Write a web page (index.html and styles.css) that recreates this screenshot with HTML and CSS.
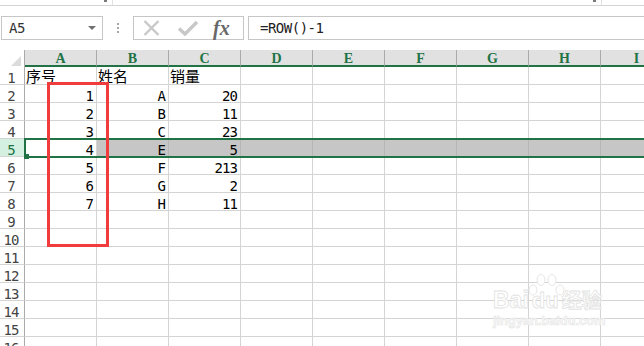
FILE: index.html
```html
<!DOCTYPE html>
<html>
<head>
<meta charset="utf-8">
<link rel="stylesheet" href="styles.css">
</head>
<body>
<div class="topstrip"><span class="mark mark1"></span><span class="tick"></span><span class="mark mark2"></span><span class="tick"></span></div>
<div class="fbar">
  <div class="namebox"><span>A5</span><span class="caret"></span></div>
  <div class="vdots"><i></i><i></i><i></i></div>
  <div class="fbtns">
    <svg class="ic-x" width="17" height="16" viewBox="0 0 17 16"><path d="M1.5 1 L15.5 15 M15.5 1 L1.5 15" stroke="#c8c8c8" stroke-width="2.4" fill="none"/></svg>
    <svg class="ic-ok" width="20" height="16" viewBox="0 0 20 16"><path d="M1 8.5 L7 14 L19 2" stroke="#c8c8c8" stroke-width="3.4" fill="none"/></svg>
    <span class="fx">fx</span>
  </div>
  <div class="formula">=ROW()-1</div>
</div>
<div class="sheet">
  <div class="grid">
    <div class="corner"><svg width="10" height="10" viewBox="0 0 10 10"><path d="M10 0 L10 10 L0 10 Z" fill="#dcdcdc"/></svg></div>
    <div class="ch">A</div><div class="ch">B</div><div class="ch">C</div><div class="ch">D</div><div class="ch">E</div><div class="ch">F</div><div class="ch">G</div><div class="ch">H</div><div class="ch">I</div>

    <div class="rh">1</div><div class="c cn">序号</div><div class="c cn">姓名</div><div class="c cn">销量</div><div class="c"></div><div class="c"></div><div class="c"></div><div class="c"></div><div class="c"></div><div class="c"></div>
    <div class="rh">2</div><div class="c r">1</div><div class="c r">A</div><div class="c r">20</div><div class="c"></div><div class="c"></div><div class="c"></div><div class="c"></div><div class="c"></div><div class="c"></div>
    <div class="rh">3</div><div class="c r">2</div><div class="c r">B</div><div class="c r">11</div><div class="c"></div><div class="c"></div><div class="c"></div><div class="c"></div><div class="c"></div><div class="c"></div>
    <div class="rh">4</div><div class="c r">3</div><div class="c r">C</div><div class="c r">23</div><div class="c"></div><div class="c"></div><div class="c"></div><div class="c"></div><div class="c"></div><div class="c"></div>
    <div class="rh rh-sel">5</div><div class="c r">4</div><div class="c r sel">E</div><div class="c r sel">5</div><div class="c sel"></div><div class="c sel"></div><div class="c sel"></div><div class="c sel"></div><div class="c sel"></div><div class="c sel"></div>
    <div class="rh">6</div><div class="c r">5</div><div class="c r">F</div><div class="c r">213</div><div class="c"></div><div class="c"></div><div class="c"></div><div class="c"></div><div class="c"></div><div class="c"></div>
    <div class="rh">7</div><div class="c r">6</div><div class="c r">G</div><div class="c r">2</div><div class="c"></div><div class="c"></div><div class="c"></div><div class="c"></div><div class="c"></div><div class="c"></div>
    <div class="rh">8</div><div class="c r">7</div><div class="c r">H</div><div class="c r">11</div><div class="c"></div><div class="c"></div><div class="c"></div><div class="c"></div><div class="c"></div><div class="c"></div>
    <div class="rh">9</div><div class="c"></div><div class="c"></div><div class="c"></div><div class="c"></div><div class="c"></div><div class="c"></div><div class="c"></div><div class="c"></div><div class="c"></div>
    <div class="rh">10</div><div class="c"></div><div class="c"></div><div class="c"></div><div class="c"></div><div class="c"></div><div class="c"></div><div class="c"></div><div class="c"></div><div class="c"></div>
    <div class="rh">11</div><div class="c"></div><div class="c"></div><div class="c"></div><div class="c"></div><div class="c"></div><div class="c"></div><div class="c"></div><div class="c"></div><div class="c"></div>
    <div class="rh">12</div><div class="c"></div><div class="c"></div><div class="c"></div><div class="c"></div><div class="c"></div><div class="c"></div><div class="c"></div><div class="c"></div><div class="c"></div>
    <div class="rh">13</div><div class="c"></div><div class="c"></div><div class="c"></div><div class="c"></div><div class="c"></div><div class="c"></div><div class="c"></div><div class="c"></div><div class="c"></div>
    <div class="rh">14</div><div class="c"></div><div class="c"></div><div class="c"></div><div class="c"></div><div class="c"></div><div class="c"></div><div class="c"></div><div class="c"></div><div class="c"></div>
    <div class="rh">15</div><div class="c"></div><div class="c"></div><div class="c"></div><div class="c"></div><div class="c"></div><div class="c"></div><div class="c"></div><div class="c"></div><div class="c"></div>
    <div class="rh">16</div><div class="c"></div><div class="c"></div><div class="c"></div><div class="c"></div><div class="c"></div><div class="c"></div><div class="c"></div><div class="c"></div><div class="c"></div>
  </div>
  <div class="selbox"></div>
  <div class="handle"></div>
  <div class="redbox"></div>
  <div class="wm">
    <svg class="paw" width="40" height="40" viewBox="0 0 40 40">
      <g fill="#fff" stroke="#e6e6e6" stroke-width="1">
        <ellipse cx="7" cy="17" rx="4" ry="5"/>
        <ellipse cx="15" cy="7" rx="4" ry="5.5"/>
        <ellipse cx="26" cy="7" rx="4" ry="5.5"/>
        <ellipse cx="34" cy="17" rx="4" ry="5"/>
      </g>
    </svg>
    <div class="wm1"><span class="wb">Bai</span><span class="wd">du</span><span class="wc">经验</span></div>
    <div class="wm2">jingyan.baidu.com</div>
  </div>
</div>
</body>
</html>
```
FILE: styles.css
```css
* { box-sizing: border-box; }
html, body { margin: 0; padding: 0; background: #fff; }
body {
  width: 644px;
  height: 346px;
  overflow: hidden;
  font-family: "DejaVu Sans Mono", monospace;
  color: #000;
}
.topstrip {
  height: 6px;
  border-bottom: 1px solid #d4d4d4;
  display: flex;
  align-items: flex-start;
}
.mark { width: 3px; height: 2px; background: #7a7a7a; }
.mark1 { margin-left: 104px; }
.mark2 { margin-left: 480px; }
.tick { margin-left: 5px; width: 1px; height: 5px; background: #e2e2e2; }

.fbar {
  margin-top: 10px;
  height: 24px;
  display: flex;
}
.namebox {
  margin-left: 1px;
  width: 102px;
  height: 24px;
  border: 1px solid #c6c6c6;
  display: flex;
  align-items: center;
  padding-left: 7px;
  font-size: 14px;
  letter-spacing: -0.5px;
  color: #333;
}
.caret {
  margin-left: auto;
  margin-right: 6px;
  width: 0;
  height: 0;
  border-left: 4px solid transparent;
  border-right: 4px solid transparent;
  border-top: 4px solid #707070;
}
.vdots {
  width: 30px;
  display: flex;
  flex-direction: column;
  align-items: center;
  justify-content: center;
  gap: 2px;
}
.vdots i { display: block; width: 2px; height: 2px; background: #a6a6a6; }
.fbtns {
  width: 111px;
  height: 24px;
  border: 1px solid #c6c6c6;
  display: flex;
  align-items: center;
}
.ic-x { margin-left: 9px; }
.ic-ok { margin-left: 18px; }
.fx {
  margin-left: 15px;
  font-family: "Liberation Serif", serif;
  font-style: italic;
  font-weight: bold;
  font-size: 20px;
  letter-spacing: 0;
  color: #686868;
  line-height: 20px;
}
.formula {
  margin-left: 4px;
  flex: 1;
  height: 24px;
  border: 1px solid #c6c6c6;
  border-right: none;
  padding-left: 11px;
  line-height: 22px;
  font-size: 14px;
  letter-spacing: -0.5px;
  color: #222;
}

.sheet {
  margin-top: 10px;
  position: relative;
}
.grid {
  display: grid;
  grid-template-columns: 25px repeat(9, 72px);
  grid-template-rows: 17px;
  grid-auto-rows: 18px;
  width: 673px;
}
.corner {
  border-right: 1px solid #ababab;
  display: flex;
  align-items: flex-end;
  justify-content: flex-end;
  padding: 0 3px 1px 0;
}
.ch {
  background: #e1e1e1;
  border-right: 1px solid #ababab;
  border-bottom: 2px solid #217346;
  color: #217346;
  font-family: "Liberation Serif", serif;
  font-weight: bold;
  font-size: 14px;
  line-height: 15px;
  padding-top: 1px;
  text-align: center;
}
.rh {
  border-right: 1px solid #ababab;
  border-bottom: 1px solid #d4d4d4;
  text-align: center;
  padding: 4px 2px 0 0;
  font-size: 14px;
  line-height: 14px;
  letter-spacing: -0.9px;
  color: #444;
  white-space: nowrap;
}
.rh-sel {
  background: #d3f0e0;
  color: #217346;
}
.c {
  border-right: 1px solid #d4d4d4;
  border-bottom: 1px solid #d4d4d4;
  font-size: 14px;
  line-height: 14px;
  letter-spacing: -0.9px;
  padding: 4px 3px 0 1px;
  white-space: nowrap;
}
.r { text-align: right; }
.cn {
  font-family: "Noto Sans CJK SC", sans-serif;
  font-size: 15px;
  letter-spacing: 0;
  line-height: 17px;
  padding: 0 0 0 1px;
}
.sel {
  background: #c6c6c6;
  border-right-color: #b6b6b6;
}

.selbox {
  position: absolute;
  left: 24px;
  top: 88px;
  width: 640px;
  height: 20px;
  border: 2px solid #217346;
  border-right: none;
}
.handle {
  position: absolute;
  left: 24px;
  top: 104px;
  width: 5px;
  height: 5px;
  background: #217346;
}
.redbox {
  position: absolute;
  left: 47px;
  top: 32px;
  width: 62px;
  height: 165px;
  border: 3px solid #f03c3c;
}
.wm {
  position: absolute;
  left: 493px;
  top: 238px;
  width: 120px;
  display: flex;
  flex-direction: column;
}
.paw {
  position: absolute;
  left: 33px;
  top: -15px;
}
.wm1 {
  display: flex;
  align-items: baseline;
  font-family: "Liberation Sans", sans-serif;
  font-weight: bold;
  color: #ffffff;
  -webkit-text-stroke: 0.8px #e2e2e2;
  line-height: 24px;
}
.wb { font-size: 23px; }
.wd { font-size: 22px; margin-left: 3px; }
.wc {
  font-family: "Noto Sans CJK SC", sans-serif;
  font-size: 20px;
  margin-left: 3px;
}
.wm2 {
  font-family: "Liberation Sans", sans-serif;
  font-weight: bold;
  font-size: 12.8px;
  line-height: 16px;
  color: #f8f8f8;
  -webkit-text-stroke: 0.5px #e4e4e4;
}
```
